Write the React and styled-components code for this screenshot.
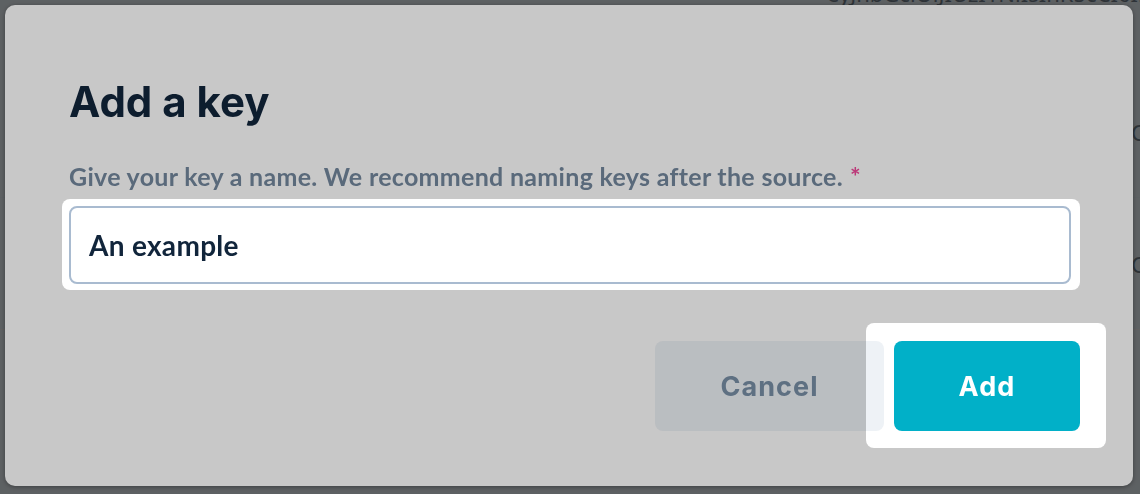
import React, { useLayoutEffect, useRef, useState } from "react";
import styled, { createGlobalStyle } from "styled-components";

const GlobalStyle = createGlobalStyle`
  html, body {
    margin: 0;
    height: 100%;
    overflow: hidden;
  }
  body {
    background: #777b7e;
    font-family: Lato, "Noto Sans", sans-serif;
  }
`;

// the app page sitting behind the dialog
const Page = styled.div`
  height: 100vh;
  display: flex;
  flex-direction: column;
`;

const TokenRow = styled.div`
  margin-top: -22px;
  height: 88px;
  flex-shrink: 0;
  padding-left: 827px;
  font-family: "Noto Sans", sans-serif;
  font-size: 22px;
  line-height: 30px;
  color: #3a4147;
  white-space: nowrap;
  overflow: hidden;
`;

const BgRow = styled.div`
  height: 132px;
  flex-shrink: 0;
  box-sizing: border-box;
  display: flex;
  align-items: center;
  padding-left: 1131px;
  font-family: "Noto Sans", sans-serif;
  font-size: 22px;
  color: #3a4147;
  white-space: nowrap;
  border-bottom: 1px solid ${(p) => (p.$odd ? "#7d7b7b" : "#747a7d")};
`;

const Backdrop = styled.div`
  position: fixed;
  inset: 0;
  box-sizing: border-box;
  padding: 5px 7px 8px 5px;
  display: flex;
`;

const Dialog = styled.div`
  flex: 1;
  box-sizing: border-box;
  display: flex;
  flex-direction: column;
  padding: 72px 62px 54px 64px;
  background: #ffffff;
  border-radius: 10px;
  box-shadow: 0 1px 4px rgba(0, 0, 0, 0.35);
`;

const Title = styled.h2`
  margin: 0;
  font-family: Inter, "Noto Sans", sans-serif;
  font-weight: 700;
  font-size: 42px;
  line-height: 50px;
  color: #10243a;
`;

const Label = styled.label`
  margin-top: 34px;
  font-family: Lato, "Noto Sans", sans-serif;
  font-weight: 700;
  font-size: 25px;
  letter-spacing: 0.3px;
  line-height: 31px;
  color: #73879d;
  span {
    margin-left: 7px;
    color: #f0489a;
  }
`;

const Field = styled.div`
  margin-top: 14px;
  height: 78px;
  box-sizing: border-box;
  display: flex;
  align-items: center;
  padding: 0 18px;
  border: 2px solid #a9bbd0;
  border-radius: 8px;
  background: #fff;
  font-family: Lato, "Noto Sans", sans-serif;
  font-weight: 700;
  font-size: 28px;
  letter-spacing: 0.3px;
  color: #10243a;
`;

const Footer = styled.div`
  margin-top: 57px;
  margin-right: -9px;
  display: flex;
  justify-content: flex-end;
  gap: 10px;
`;

const Button = styled.button`
  width: ${(p) => p.$width}px;
  height: 90px;
  border: none;
  border-radius: 8px;
  font-family: Inter, "Noto Sans", sans-serif;
  font-weight: 700;
  font-size: 27px;
  letter-spacing: 0.04em;
  background: ${(p) => (p.$primary ? "#00b0c8" : "#eef2f6")};
  color: ${(p) => (p.$primary ? "#ffffff" : "#788fa6")};
  cursor: pointer;
`;

// tour overlay: dims everything except the spotlight holes
const TourOverlay = styled.div`
  position: fixed;
  inset: 0;
  z-index: 10;
  background: rgba(0, 0, 0, 0.216);
  mix-blend-mode: hard-light;
  pointer-events: none;
`;

const Spotlight = styled.div`
  position: absolute;
  background: #808080;
  border-radius: 8px;
`;

const grow = (r, [t, rt, b, l]) => ({
  left: r.left - l,
  top: r.top - t,
  width: r.width + l + rt,
  height: r.height + t + b,
});

export default function App() {
  const fieldRef = useRef(null);
  const addRef = useRef(null);
  const [spots, setSpots] = useState([]);

  useLayoutEffect(() => {
    const measure = () => {
      const f = fieldRef.current.getBoundingClientRect();
      const a = addRef.current.getBoundingClientRect();
      setSpots([grow(f, [7, 9, 6, 7]), grow(a, [18, 26, 17, 28])]);
    };
    measure();
    window.addEventListener("resize", measure);
    return () => window.removeEventListener("resize", measure);
  }, []);

  return (
    <>
      <GlobalStyle />
      <Page>
        <TokenRow>eyJhbGciOiJIUzI1NiIsInR5cCI6IkpXVCJ9</TokenRow>
        <BgRow>Copy</BgRow>
        <BgRow $odd>Copy</BgRow>
      </Page>
      <Backdrop>
        <Dialog role="dialog">
          <Title>Add a key</Title>
          <Label>
            Give your key a name. We recommend naming keys after the source.
            <span>*</span>
          </Label>
          <Field ref={fieldRef} role="textbox">An example</Field>
          <Footer>
            <Button $width={229}>Cancel</Button>
            <Button ref={addRef} $primary $width={186}>Add</Button>
          </Footer>
        </Dialog>
      </Backdrop>
      <TourOverlay>
        {spots.map((s, i) => (
          <Spotlight key={i} style={s} />
        ))}
      </TourOverlay>
    </>
  );
}
